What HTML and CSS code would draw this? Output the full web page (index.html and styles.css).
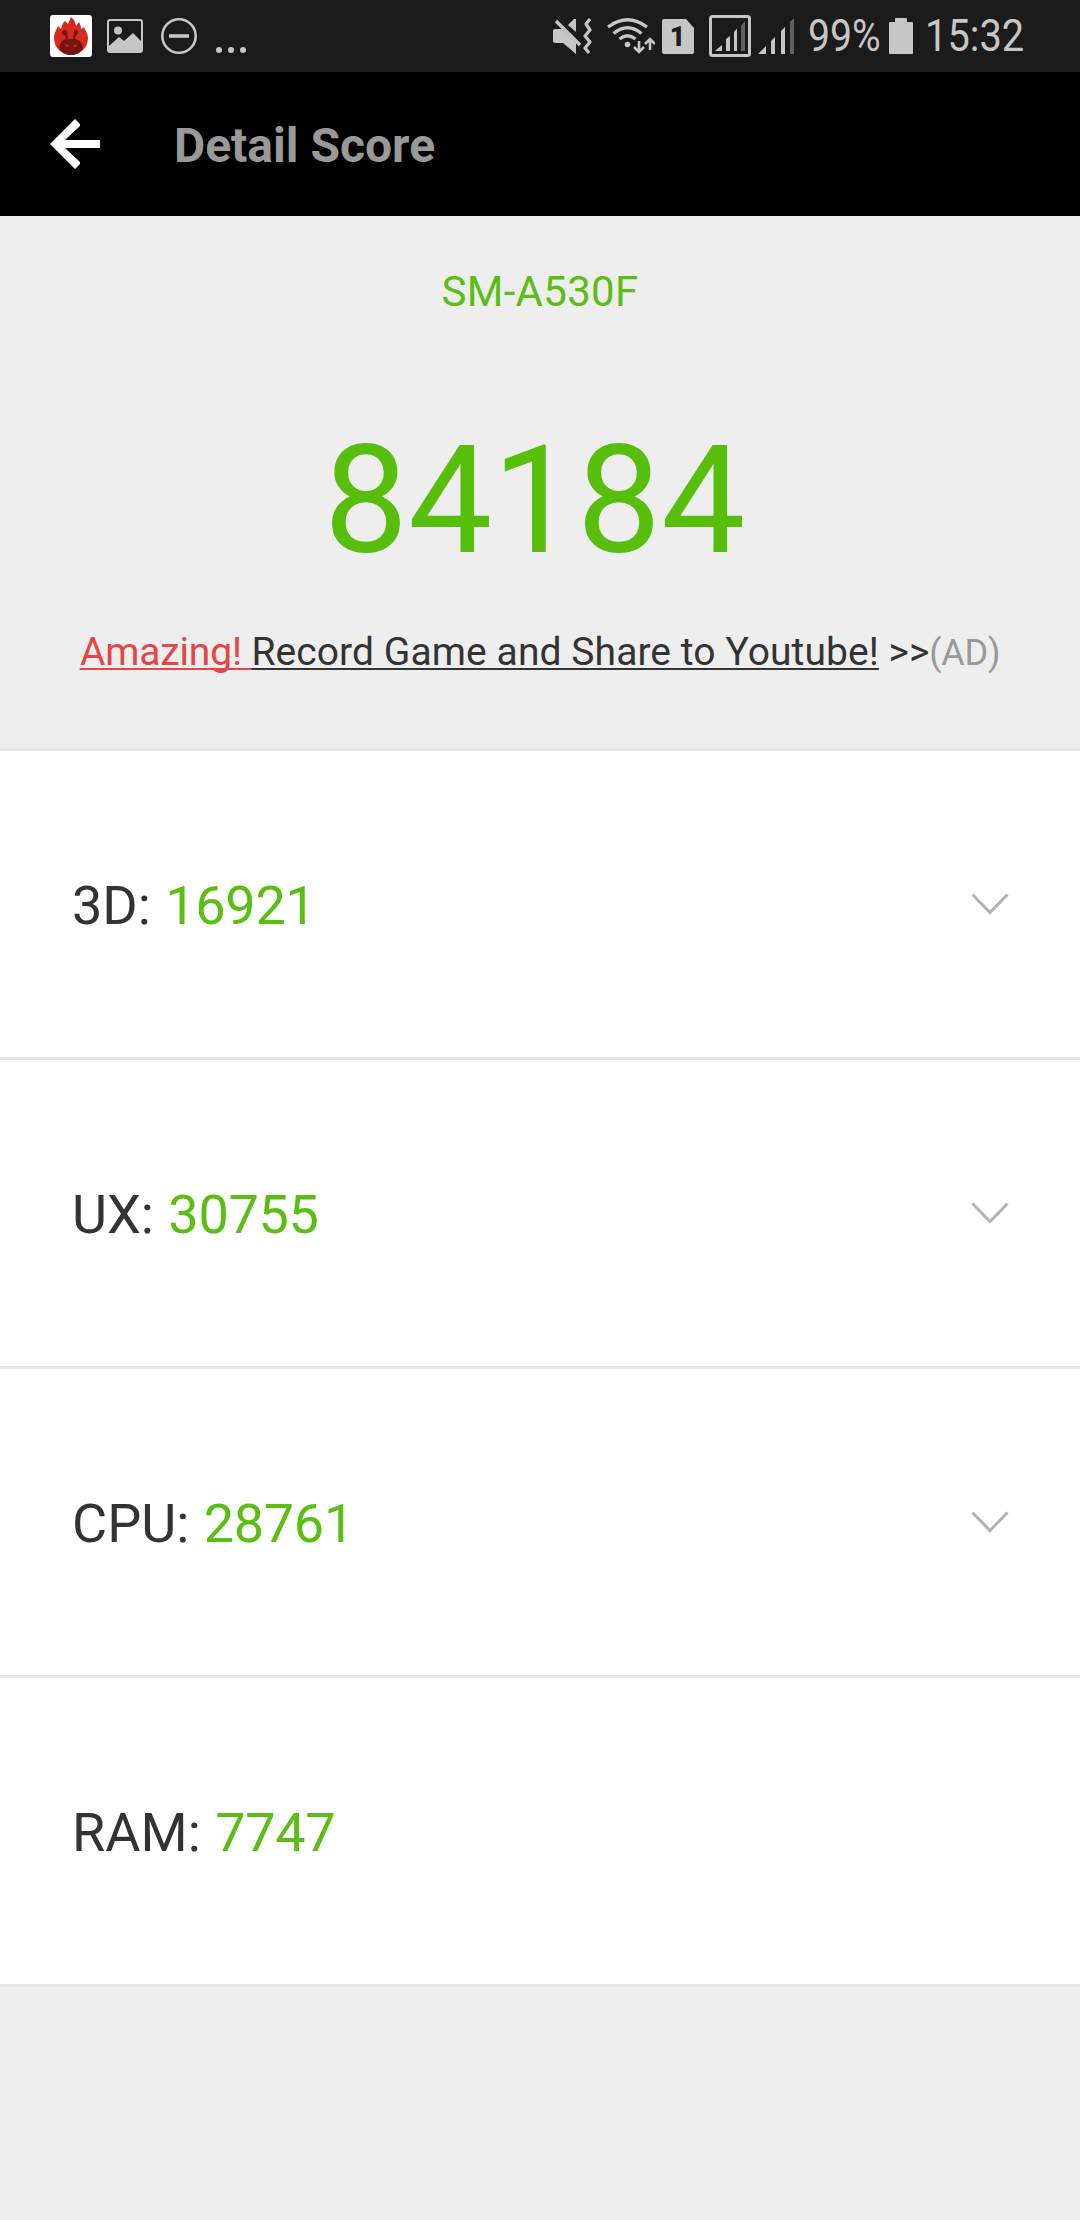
FILE: index.html
```html
<!DOCTYPE html>
<html lang="en">
<head>
	<meta charset="UTF-8">
	<title>Detail Score</title>
	<link rel="stylesheet" href="styles.css">
</head>
<body>
	<div class="status">
		<div class="notices">
			<svg width="42" height="42" viewBox="0 0 42 42">
				<rect width="42" height="42" rx="3" fill="#fff"/>
				<path d="M4 23C4 18 6 16 8 11L11 14C12 11 12 9 15 6L18 9L21 2C25 6 25 7 26 11L29 7C31 11 31 12 31 14L34 12C36 17 38 19 38 23C38 33 30 40 21 40S4 33 4 23Z" fill="#d52b20"/>
				<path d="M9 33C10 28 12 25 16 24C16 20 12 20 12 17C12 15 16 14 17 17L18 24H23L24 17C25 14 28 15 28 17C28 20 25 20 25 24C30 25 32 28 33 33C30 38 26 40 21 40S12 38 9 33Z" fill="#761313"/>
				<path d="M14 29l6 2-3 1zM28 29l-6 2 3 1z" fill="#d52b20"/>
			</svg>
			<svg class="picture" width="36" height="34" viewBox="0 0 36 34">
				<rect x="1" y="1" width="34" height="32" rx="2" fill="none" stroke="#c6c6c6" stroke-width="2"/>
				<circle cx="11" cy="11.500" r="4" fill="#c6c6c6"/>
				<path d="M2 27L12 18L17 22L26 14L34 22V32H2Z" fill="#c6c6c6"/>
			</svg>
			<svg class="dnd" width="36" height="36" viewBox="0 0 36 36">
				<circle cx="18" cy="18" r="16.700" fill="none" stroke="#c6c6c6" stroke-width="2.600"/>
				<path d="M8 18H28" stroke="#c6c6c6" stroke-width="3.600"/>
			</svg>
			<svg class="more" width="30" height="36" viewBox="0 0 30 36">
				<g fill="#c6c6c6"><circle cx="3" cy="32" r="3"/><circle cx="15" cy="32" r="3"/><circle cx="27" cy="32" r="3"/></g>
			</svg>
		</div>
		<div class="system">
			<svg class="mute" width="39" height="36" viewBox="0 0 39 36">
				<path d="M0 13Q0 11 2 11H9L23 25V36L10 25H2Q0 25 0 23Z" fill="#c6c6c6"/>
				<path d="M15 7L21 1H23V14Z" fill="#c6c6c6"/>
				<path d="M3 3L27 27" stroke="#c6c6c6" stroke-width="3.400"/>
				<path d="M37 1L33 6L37 12L32 18L37 24L32 30L36 35" fill="none" stroke="#c6c6c6" stroke-width="3.200" stroke-linejoin="round"/>
			</svg>
			<svg class="wifi" width="48" height="36" viewBox="0 0 48 36">
				<g fill="none" stroke="#c6c6c6" stroke-width="3.400">
					<path d="M1 9Q20.500 -5.500 40 9"/>
					<path d="M6.500 15.500Q20.500 4 34.500 15.500"/>
					<path d="M12.500 21Q20.500 14.500 28.500 21"/>
				</g>
				<circle cx="20.500" cy="26.500" r="2.800" fill="#c6c6c6"/>
				<path d="M32 23V34M27 29L32 34L37 29M43 32V21M38 26L43 21L48 26" fill="none" stroke="#c6c6c6" stroke-width="2.600"/>
			</svg>
			<div class="sim">
				<svg width="32" height="35" viewBox="0 0 32 35"><path d="M2 0H24L32 9V33Q32 35 30 35H2Q0 35 0 33V2Q0 0 2 0Z" fill="#c6c6c6"/></svg>
				<span>1</span>
			</div>
			<svg class="sim-signal" width="42" height="42" viewBox="0 0 42 42">
				<rect x="1.500" y="1.500" width="39" height="39" rx="2" fill="none" stroke="#c6c6c6" stroke-width="3"/>
				<path d="M6 36L13 30V36ZM17 24L21 21V36H17ZM25 17L28 13.500V36H25Z" fill="#c6c6c6"/>
				<path d="M32 11L36 6V36H32Z" fill="#606060"/>
			</svg>
			<svg class="signal" width="36" height="36" viewBox="0 0 36 36">
				<path d="M0 36L8 28V36ZM13 23L17 19V36H13ZM23 13L27 9V36H23Z" fill="#c6c6c6"/>
				<path d="M32 4L36 0V36H32Z" fill="#606060"/>
			</svg>
			<div class="percent"><span>99%</span></div>
			<svg class="battery" width="24" height="36" viewBox="0 0 24 36">
				<path d="M7 0H17Q18 0 18 1V4H23Q24 4 24 5V35Q24 36 23 36H1Q0 36 0 35V5Q0 4 1 4H6V1Q6 0 7 0Z" fill="#c6c6c6"/>
			</svg>
			<div class="clock"><span>15:32</span></div>
		</div>
	</div>

	<div class="header">
		<svg width="50" height="50" viewBox="0 0 50 50">
			<path d="M0 25L25 0L30 5V7L15 21H50V29H15L30 43V45L25 50Z" fill="#fff"/>
		</svg>
		<h1>Detail Score</h1>
	</div>

	<div class="summary">
		<div class="model">SM-A530F</div>
		<div class="total">84184</div>
		<div class="ad"><a class="link"><span class="red">Amazing! </span>Record Game and Share to Youtube!</a> &gt;&gt;<span class="mark">(AD)</span></div>
	</div>

	<div class="list">
		<div class="row">
			<div>3D: <span class="score">16921</span></div>
			<svg class="arrow" width="38" height="22" viewBox="0 0 38 22"><path d="M1.500 1.500L19 19.500L36.500 1.500"/></svg>
		</div>
		<div class="row">
			<div>UX: <span class="score">30755</span></div>
			<svg class="arrow" width="38" height="22" viewBox="0 0 38 22"><path d="M1.500 1.500L19 19.500L36.500 1.500"/></svg>
		</div>
		<div class="row">
			<div>CPU: <span class="score">28761</span></div>
			<svg class="arrow" width="38" height="22" viewBox="0 0 38 22"><path d="M1.500 1.500L19 19.500L36.500 1.500"/></svg>
		</div>
		<div class="row">
			<div>RAM: <span class="score">7747</span></div>
		</div>
	</div>
</body>
</html>
```
FILE: styles.css
```css
*{
	margin: 0;
	padding: 0;
	box-sizing: border-box;
}
body{
	width: 1080px;
	min-height: 2220px;
	background: #eee;
	color: #333;
	font-family: Roboto, "Liberation Sans", sans-serif;
}
svg{
	display: block;
	flex: none;
}

/* status bar */
.status{
	display: flex;
	justify-content: space-between;
	height: 72px;
	padding: 0 54px 0 50px;
	background: #1b1b1b;
	color: #c6c6c6;
}
.notices, .system{
	display: flex;
	align-items: center;
}
.picture{
	margin-left: 15px;
}
.dnd{
	margin-left: 18px;
}
.more{
	margin-left: 19px;
}
.wifi{
	margin-left: 15px;
}
.sim{
	position: relative;
	margin-left: 7px;
}
.sim span{
	position: absolute;
	top: 0;
	left: 0;
	width: 31px;
	line-height: 37px;
	text-align: center;
	font-size: 27px;
	font-weight: 900;
	color: #1b1b1b;
}
.sim-signal{
	margin-left: 15px;
}
.signal{
	margin-left: 7px;
}
.percent, .clock{
	font-size: 45px;
	line-height: 74px;
	white-space: nowrap;
}
.percent span, .clock span{
	display: inline-block;
	transform: scaleX(.87);
	transform-origin: left;
}
.percent{
	width: 72px;
	margin-left: 14px;
}
.battery{
	margin-left: 9px;
}
.clock{
	width: 101px;
	margin-left: 12px;
}
.clock span{
	transform: scaleX(.885);
}

/* title bar */
.header{
	display: flex;
	align-items: center;
	height: 144px;
	padding-left: 50px;
	background: #000;
}
.header h1{
	margin: 3px 0 0 74px;
	font-size: 48px;
	line-height: 56px;
	color: #999;
}

/* total score */
.summary{
	height: 535px;
	padding-top: 51px;
	border-bottom: 3px solid #e6e6e6;
	text-align: center;
}
.model{
	font-size: 42px;
	line-height: 50px;
	letter-spacing: .3px;
	color: #5abe14;
}
.total{
	margin-top: 96px;
	padding-right: 11px;
	font-size: 150px;
	line-height: 176px;
	color: #57be0c;
}
.ad{
	margin-top: 40px;
	font-size: 39px;
	line-height: 46px;
	white-space: nowrap;
}
.link{
	letter-spacing: .08px;
	text-decoration: underline;
	text-decoration-thickness: 2px;
	text-underline-offset: 3px;
	text-decoration-skip-ink: none;
}
.red{
	letter-spacing: -.15px;
	color: #e64545;
	text-decoration: underline;
	text-decoration-thickness: 2px;
	text-underline-offset: 3px;
	text-decoration-skip-ink: none;
}
.mark{
	font-size: 36px;
	letter-spacing: -.3px;
	color: #999;
}

/* score list */
.row{
	display: flex;
	justify-content: space-between;
	align-items: center;
	height: 309px;
	padding: 0 71px 0 72px;
	border-bottom: 3px solid #e6e6e6;
	background: #fff;
	font-size: 54px;
}
.row div{
	padding-top: 3px;
}
.score{
	margin-left: 1px;
	letter-spacing: -.3px;
	color: #5abe14;
}
.arrow path{
	fill: none;
	stroke: #b3b3b3;
	stroke-width: 3;
}
```
